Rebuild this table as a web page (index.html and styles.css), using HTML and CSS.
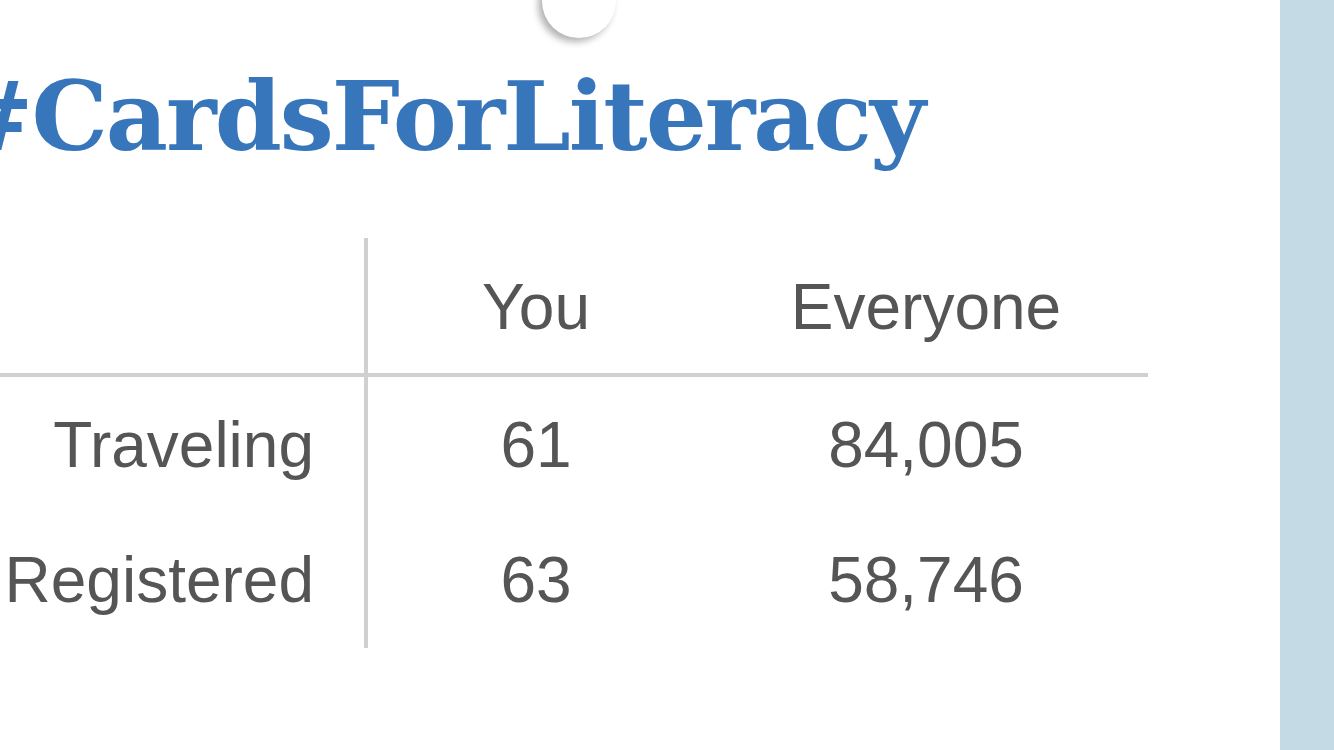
FILE: index.html
```html
<!DOCTYPE html>
<html>
<head>
<meta charset="utf-8">
<link rel="stylesheet" href="styles.css">
</head>
<body>
<div class="page">
  <main class="card">
    <div class="pin"></div>
    <h1 class="title">#CardsForLiteracy</h1>
    <div class="stats">
      <div class="cell label head"></div>
      <div class="cell head">You</div>
      <div class="cell head">Everyone</div>
      <div class="cell label">Traveling</div>
      <div class="cell">61</div>
      <div class="cell">84,005</div>
      <div class="cell label">Registered</div>
      <div class="cell">63</div>
      <div class="cell">58,746</div>
    </div>
  </main>
  <aside class="side"></aside>
</div>
</body>
</html>
```
FILE: styles.css
```css
html, body {
  margin: 0;
  padding: 0;
  background: #fff;
}
.page {
  display: flex;
  width: 1334px;
  height: 750px;
  overflow: hidden;
}
.card {
  flex: 1;
  position: relative;
  overflow: hidden;
  background: #fff;
}
.side {
  width: 54px;
  background: #c4dbe6;
}
.pin {
  position: absolute;
  left: 542px;
  top: -36px;
  width: 74px;
  height: 74px;
  border-radius: 50%;
  background: #fff;
  box-shadow: -4px 4px 7px rgba(0, 0, 0, 0.3);
}
.title {
  margin: 0 0 0 -47px;
  padding-top: 62px;
  height: 176px;
  box-sizing: border-box;
  font-family: "DejaVu Serif", Georgia, serif;
  font-weight: bold;
  font-size: 96px;
  line-height: 110px;
  color: #3776ba;
  white-space: nowrap;
  letter-spacing: -2px;
}
.stats {
  display: grid;
  grid-template-columns: 368px 380px 400px;
  grid-template-rows: 139px 135px 136px;
  margin-top: 62px;
  font-family: "Liberation Sans", Arial, sans-serif;
  font-size: 64px;
  color: #555;
}
.cell {
  display: flex;
  align-items: center;
  justify-content: center;
  padding-right: 44px;
}
.cell.label {
  justify-content: flex-end;
  padding-right: 50px;
  border-right: 4px solid #d0d0d0;
}
.cell.head {
  border-bottom: 4px solid #d0d0d0;
  padding-top: 2px;
}
```
